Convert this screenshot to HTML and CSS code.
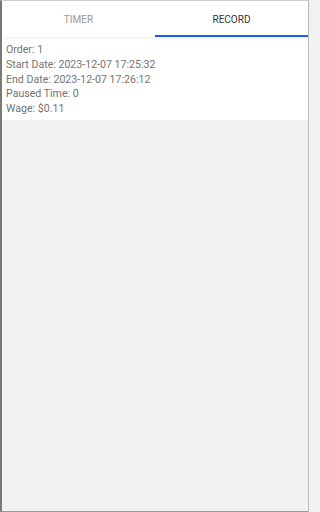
FILE: index.html
```html
<!DOCTYPE html>
<html>
<head>
<meta charset="utf-8">
<link rel="stylesheet" href="styles.css">
</head>
<body>
<div class="frame">
  <div class="tabs">
    <div class="tab">TIMER</div>
    <div class="tab active">RECORD</div>
  </div>
  <div class="record">
    <div class="line">Order: 1</div>
    <div class="line">Start Date: 2023-12-07 17:25:32</div>
    <div class="line">End Date: 2023-12-07 17:26:12</div>
    <div class="line">Paused Time: 0</div>
    <div class="line">Wage: $0.11</div>
  </div>
</div>
</body>
</html>
```
FILE: styles.css
```css
html, body {
  margin: 0;
  padding: 0;
}
body {
  font-family: Roboto, "Liberation Sans", sans-serif;
  background: #f2f2f2;
}
.frame {
  box-sizing: border-box;
  width: 309px;
  height: 512px;
  background: #f2f2f2;
  border-left: 2px solid #7a7a7a;
  border-right: 1px solid #bdbdbd;
  border-top: 1px solid #cfcfcf;
  border-bottom: 1px solid #9a9a9a;
  display: flex;
  flex-direction: column;
}
.tabs {
  display: flex;
  background: #fff;
  height: 36px;
  box-shadow: 0 1px 3px rgba(0,0,0,0.08);
  position: relative;
  z-index: 1;
}
.tab {
  flex: 1;
  display: flex;
  align-items: center;
  justify-content: center;
  font-size: 10px;
  color: #9a9a9a;
  box-sizing: border-box;
  border-bottom: 2px solid transparent;
  padding-top: 2px;
}
.tab.active {
  color: #333;
  border-bottom-color: #1a5fe0;
}
.record {
  background: #fff;
  padding: 6px 4px 3px;
}
.line {
  font-size: 10.6px;
  line-height: 14.8px;
  color: #737373;
}
```
